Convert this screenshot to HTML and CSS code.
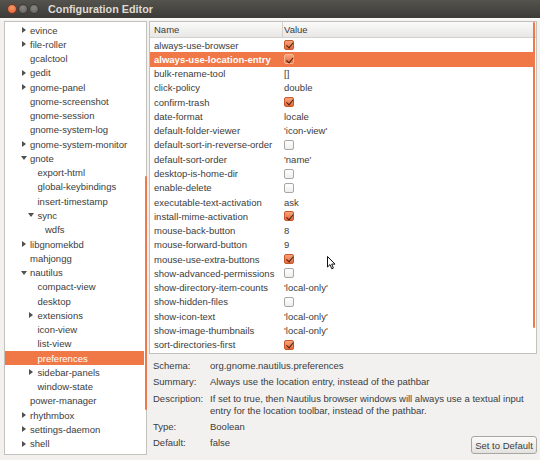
FILE: index.html
```html
<!DOCTYPE html>
<html>
<head>
<meta charset="utf-8">
<link rel="stylesheet" href="styles.css">
</head>
<body>
<div class="window">
  <div class="titlebar">
    <span class="wbtn close"></span>
    <span class="wbtn"></span>
    <span class="wbtn"></span>
    <span class="title">Configuration Editor</span>
  </div>
  <div class="main">
    <div class="tree">
      <div class="trow l1"><span class="exp c"></span>evince</div>
      <div class="trow l1"><span class="exp c"></span>file-roller</div>
      <div class="trow l1"><span class="exp"></span>gcalctool</div>
      <div class="trow l1"><span class="exp c"></span>gedit</div>
      <div class="trow l1"><span class="exp c"></span>gnome-panel</div>
      <div class="trow l1"><span class="exp"></span>gnome-screenshot</div>
      <div class="trow l1"><span class="exp"></span>gnome-session</div>
      <div class="trow l1"><span class="exp"></span>gnome-system-log</div>
      <div class="trow l1"><span class="exp c"></span>gnome-system-monitor</div>
      <div class="trow l1"><span class="exp o"></span>gnote</div>
      <div class="trow l2"><span class="exp"></span>export-html</div>
      <div class="trow l2"><span class="exp"></span>global-keybindings</div>
      <div class="trow l2"><span class="exp"></span>insert-timestamp</div>
      <div class="trow l2"><span class="exp o"></span>sync</div>
      <div class="trow l3"><span class="exp"></span>wdfs</div>
      <div class="trow l1"><span class="exp c"></span>libgnomekbd</div>
      <div class="trow l1"><span class="exp"></span>mahjongg</div>
      <div class="trow l1"><span class="exp o"></span>nautilus</div>
      <div class="trow l2"><span class="exp"></span>compact-view</div>
      <div class="trow l2"><span class="exp"></span>desktop</div>
      <div class="trow l2"><span class="exp c"></span>extensions</div>
      <div class="trow l2"><span class="exp"></span>icon-view</div>
      <div class="trow l2"><span class="exp"></span>list-view</div>
      <div class="trow l2 sel"><span class="exp"></span>preferences</div>
      <div class="trow l2"><span class="exp c"></span>sidebar-panels</div>
      <div class="trow l2"><span class="exp"></span>window-state</div>
      <div class="trow l1"><span class="exp"></span>power-manager</div>
      <div class="trow l1"><span class="exp c"></span>rhythmbox</div>
      <div class="trow l1"><span class="exp c"></span>settings-daemon</div>
      <div class="trow l1"><span class="exp c"></span>shell</div>
      <div class="scroll-left"></div>
    </div>
    <div class="right">
      <div class="list">
        <div class="lhead"><span class="hname">Name</span><span class="hval">Value</span></div>
        <div class="lrow"><span>always-use-browser</span><span class="cb on"></span></div>
        <div class="lrow sel"><span>always-use-location-entry</span><span class="cb on"></span></div>
        <div class="lrow"><span>bulk-rename-tool</span><span>[]</span></div>
        <div class="lrow"><span>click-policy</span><span>double</span></div>
        <div class="lrow"><span>confirm-trash</span><span class="cb on"></span></div>
        <div class="lrow"><span>date-format</span><span>locale</span></div>
        <div class="lrow"><span>default-folder-viewer</span><span>'icon-view'</span></div>
        <div class="lrow"><span>default-sort-in-reverse-order</span><span class="cb"></span></div>
        <div class="lrow"><span>default-sort-order</span><span>'name'</span></div>
        <div class="lrow"><span>desktop-is-home-dir</span><span class="cb"></span></div>
        <div class="lrow"><span>enable-delete</span><span class="cb"></span></div>
        <div class="lrow"><span>executable-text-activation</span><span>ask</span></div>
        <div class="lrow"><span>install-mime-activation</span><span class="cb on"></span></div>
        <div class="lrow"><span>mouse-back-button</span><span>8</span></div>
        <div class="lrow"><span>mouse-forward-button</span><span>9</span></div>
        <div class="lrow"><span>mouse-use-extra-buttons</span><span class="cb on"></span></div>
        <div class="lrow"><span>show-advanced-permissions</span><span class="cb"></span></div>
        <div class="lrow"><span>show-directory-item-counts</span><span>'local-only'</span></div>
        <div class="lrow"><span>show-hidden-files</span><span class="cb"></span></div>
        <div class="lrow"><span>show-icon-text</span><span>'local-only'</span></div>
        <div class="lrow"><span>show-image-thumbnails</span><span>'local-only'</span></div>
        <div class="lrow"><span>sort-directories-first</span><span class="cb on"></span></div>
        <div class="scroll-right"></div>
      </div>
      <div class="details">
        <span class="dl">Schema:</span><span class="dv">org.gnome.nautilus.preferences</span>
        <span class="dl">Summary:</span><span class="dv">Always use the location entry, instead of the pathbar</span>
        <span class="dl">Description:</span><span class="dv">If set to true, then Nautilus browser windows will always use a textual input entry for the location toolbar, instead of the pathbar.</span>
        <span class="dl">Type:</span><span class="dv">Boolean</span>
        <span class="dl">Default:</span><span class="dv last"><span>false</span><button class="btn">Set to Default</button></span>
      </div>
    </div>
  </div>
  <svg class="cursor" width="9" height="14" viewBox="0 0 9 14"><path d="M0.5 0.5 L0.5 11 L3 8.6 L4.8 12.8 L6.4 12.1 L4.7 8.1 L8 8.1 Z" fill="#fff" stroke="#111" stroke-width="1" stroke-linejoin="round"/></svg>
</div>
</body>
</html>
```
FILE: styles.css
```css
* { box-sizing: border-box; }
html, body { margin: 0; padding: 0; }
body {
  width: 540px;
  height: 460px;
  overflow: hidden;
  background: #f2f1f0;
  font-family: "Liberation Sans", "DejaVu Sans", sans-serif;
  font-size: 9.5px;
  color: #3c3c3c;
}
.window {
  position: relative;
  width: 540px;
  height: 460px;
  background: #f2f1f0;
  display: flex;
  flex-direction: column;
}
.titlebar {
  height: 18px;
  flex: none;
  background: linear-gradient(#55534e, #3c3b37);
  display: flex;
  align-items: center;
  padding-left: 7px;
  gap: 1px;
}
.wbtn {
  width: 10px;
  height: 10px;
  border-radius: 50%;
  background: radial-gradient(circle at 50% 35%, #8a8883, #5d5c58);
  border: 1px solid #3a3935;
}
.wbtn.close {
  background: radial-gradient(circle at 50% 35%, #f49a6e, #e2582a);
  border-color: #6b3a24;
}
.title {
  margin-left: 8px;
  color: #dfdbd2;
  font-weight: bold;
  font-size: 10.8px;
}
.main {
  flex: 1;
  display: flex;
  gap: 2px;
  padding: 3px 3px 5px 4px;
  background: linear-gradient(#fbfbfa 0, #f2f1f0 3px);
}
.tree {
  position: relative;
  width: 143px;
  height: 434px;
  background: #fff;
  border: 1px solid #c3c1bc;
  padding-top: 0.9px;
  padding-left: 0;
}
.trow {
  height: 14.28px;
  display: flex;
  align-items: center;
  white-space: nowrap;
}
.trow.l1 { padding-left: 15px; }
.trow.l2 { padding-left: 22.5px; }
.trow.l3 { padding-left: 30px; }
.trow.sel { background: #f07746; color: #fff; margin-right: 2px; }
.exp {
  width: 10px;
  height: 8px;
  flex: none;
  position: relative;
}
.exp.c::before {
  content: "";
  position: absolute;
  left: 1.5px;
  top: 1px;
  border-left: 4px solid #505050;
  border-top: 3px solid transparent;
  border-bottom: 3px solid transparent;
}
.exp.o::before {
  content: "";
  position: absolute;
  left: 0.5px;
  top: 2px;
  border-top: 4px solid #505050;
  border-left: 3px solid transparent;
  border-right: 3px solid transparent;
}
.scroll-left {
  position: absolute;
  left: 139.5px;
  top: 154px;
  width: 2.5px;
  height: 234px;
  background: #ee7a4c;
  border-radius: 1px;
}
.right {
  flex: 1;
  display: flex;
  flex-direction: column;
}
.list {
  position: relative;
  height: 333px;
  background: #fff;
  border: 1px solid #c3c1bc;
}
.lhead {
  height: 16px;
  display: grid;
  grid-template-columns: 133px 1fr;
  align-items: center;
  background: linear-gradient(#fafafa, #e8e7e5);
  border-bottom: 1px solid #d3d1cd;
}
.hname { padding-left: 4px; border-right: 1px solid #d3d1cd; height: 100%; display: flex; align-items: center; }
.hval { padding-left: 1px; }
.lrow {
  height: 14.28px;
  display: grid;
  grid-template-columns: 133px 1fr;
  align-items: center;
  white-space: nowrap;
}
.lrow > span:first-child { padding-left: 4px; }
.lrow > span:nth-child(2) { margin-left: 1px; }
.lrow.sel { background: #f07746; color: #fff; font-weight: bold; margin-right: 3px; }
.cb {
  width: 10px;
  height: 10px;
  border: 1px solid #a9a7a3;
  border-radius: 2px;
  background: linear-gradient(#ffffff, #eeeeec);
  position: relative;
}
.cb.on {
  border-color: #c8572a;
  background: linear-gradient(#f7a57c, #e8683a);
}
.lrow.sel .cb.on { border-color: #f8b896; }
.cb.on::after {
  content: "";
  position: absolute;
  left: 2.6px;
  top: 0.2px;
  width: 3px;
  height: 5.5px;
  border-right: 1.4px solid #3f2418;
  border-bottom: 1.4px solid #3f2418;
  transform: rotate(40deg);
}
.scroll-right {
  position: absolute;
  right: 1px;
  top: 0;
  width: 2.5px;
  height: 306px;
  background: #ee7a4c;
  border-radius: 1px;
}
.details {
  display: grid;
  grid-template-columns: 57px 1fr;
  row-gap: 4.3px;
  padding: 6px 0 0 4px;
  line-height: 12px;
}
.dl, .dv { white-space: nowrap; }
.dv { white-space: normal; }
.dv.last {
  display: flex;
  justify-content: space-between;
  align-items: flex-start;
}
.btn {
  margin-top: -1px;
  height: 18px;
  width: 66px;
  padding: 0;
  font-family: inherit;
  font-size: 9.5px;
  color: #3c3c3c;
  border: 1px solid #a8a6a1;
  border-radius: 3px;
  background: linear-gradient(#fbfbfa, #e4e2df);
  white-space: nowrap;
}
.cursor {
  position: absolute;
  left: 327px;
  top: 256px;
}
```
